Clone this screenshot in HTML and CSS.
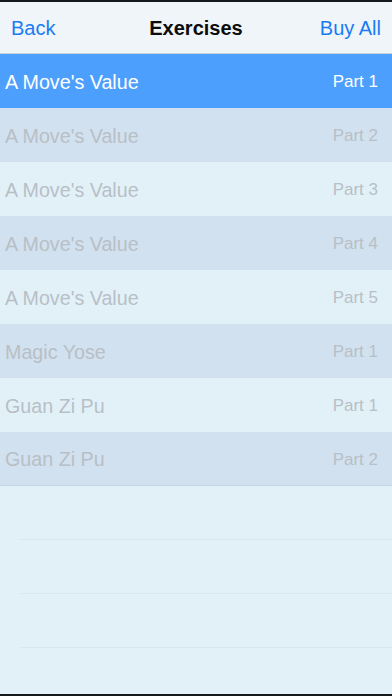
FILE: index.html
```html
<!DOCTYPE html>
<html>
<head>
<meta charset="utf-8">
<link rel="stylesheet" href="styles.css">
</head>
<body>
<div class="screen">
  <header class="nav">
    <span class="nav-btn left">Back</span>
    <span class="nav-title">Exercises</span>
    <span class="nav-btn right">Buy All</span>
  </header>
  <main class="list">
    <div class="row selected"><span class="name">A Move's Value</span><span class="part">Part 1</span></div>
    <div class="row dark"><span class="name">A Move's Value</span><span class="part">Part 2</span></div>
    <div class="row light"><span class="name">A Move's Value</span><span class="part">Part 3</span></div>
    <div class="row dark"><span class="name">A Move's Value</span><span class="part">Part 4</span></div>
    <div class="row light"><span class="name">A Move's Value</span><span class="part">Part 5</span></div>
    <div class="row dark"><span class="name">Magic Yose</span><span class="part">Part 1</span></div>
    <div class="row light"><span class="name">Guan Zi Pu</span><span class="part">Part 1</span></div>
    <div class="row dark last"><span class="name">Guan Zi Pu</span><span class="part">Part 2</span></div>
    <div class="empty"></div>
    <div class="empty"></div>
    <div class="empty"></div>
    <div class="empty"></div>
  </main>
</div>
</body>
</html>
```
FILE: styles.css
```css
html, body {
  margin: 0;
  padding: 0;
  background: #151a1e;
}
.screen {
  width: 392px;
  height: 696px;
  box-sizing: border-box;
  border-top: 2px solid #15191c;
  border-bottom: 2px solid #15191c;
  background: #e2f1f8;
  display: flex;
  flex-direction: column;
  overflow: hidden;
  font-family: "Liberation Sans", Arial, sans-serif;
}
.nav {
  height: 52px;
  flex: none;
  box-sizing: border-box;
  border-bottom: 1px solid #c9d2d9;
  background: #eff5f8;
  display: grid;
  grid-template-columns: 1fr auto 1fr;
  align-items: center;
  padding: 1px 11px 0 11px;
}
.nav-btn {
  color: #1a7cf4;
  font-size: 20px;
}
.nav-btn.right {
  justify-self: end;
}
.nav-title {
  color: #0c0c0c;
  font-size: 20px;
  font-weight: bold;
}
.list {
  flex: 1;
  display: flex;
  flex-direction: column;
}
.row {
  height: 54px;
  flex: none;
  display: flex;
  align-items: center;
  justify-content: space-between;
  padding: 2px 14px 0 5px;
  box-sizing: border-box;
}
.row .name {
  font-size: 19.7px;
  color: #b8bfc6;
}
.row .part {
  font-size: 17px;
  color: #b8bfc6;
}
.row.selected {
  background: #4d9ffd;
}
.row.selected .name,
.row.selected .part {
  color: #ffffff;
}
.row.dark {
  background: #d1e1ef;
}
.row.light {
  background: #e2f1f8;
}
.row.last {
  border-bottom: 1px solid #c8d6e3;
}
.empty {
  height: 54px;
  flex: none;
  margin-left: 20px;
  box-sizing: border-box;
  border-bottom: 1px solid #d9e8f0;
}
```
